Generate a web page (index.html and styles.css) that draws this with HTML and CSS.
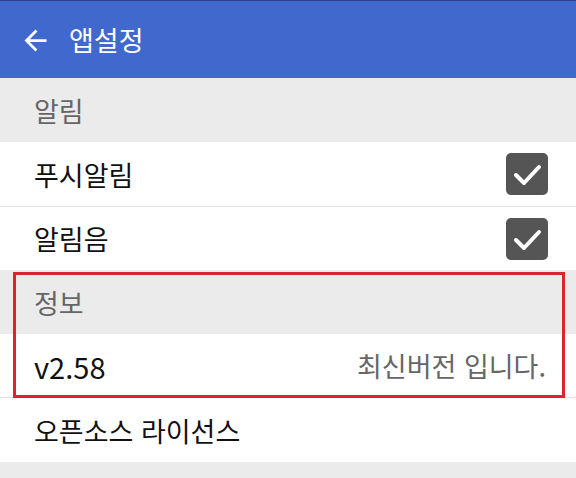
FILE: index.html
```html
<!DOCTYPE html>
<html lang="ko">
<head>
    <meta charset="UTF-8">
    <meta name="viewport" content="width=device-width, initial-scale=1.0">
    <title>앱설정</title>
    <link rel="stylesheet" href="styles.css">
</head>
<body>

<header class="appbar">
    <svg class="back-icon" viewBox="0 0 24 24" width="33" height="33">
        <path d="M20 11H7.83l5.59-5.59L12 4l-8 8 8 8 1.41-1.41L7.83 13H20v-2z" fill="#ffffff"/>
    </svg>
    <div class="appbar-title">앱설정</div>
</header>

<div class="section-title">알림</div>
<div class="row row-line">
    <span class="row-label">푸시알림</span>
    <span class="checkbox">
        <svg viewBox="0 0 42 42" width="42" height="42">
            <path d="M10 22 L18 30 L33 14" fill="none" stroke="#ffffff" stroke-width="4" stroke-linecap="round" stroke-linejoin="round"/>
        </svg>
    </span>
</div>
<div class="row row-short">
    <span class="row-label">알림음</span>
    <span class="checkbox">
        <svg viewBox="0 0 42 42" width="42" height="42">
            <path d="M10 22 L18 30 L33 14" fill="none" stroke="#ffffff" stroke-width="4" stroke-linecap="round" stroke-linejoin="round"/>
        </svg>
    </span>
</div>

<div class="highlight">
    <div class="section-title">정보</div>
    <div class="row row-short row-line">
        <span class="row-label version">v2.58</span>
        <span class="row-value">최신버전 입니다.</span>
    </div>
</div>
<div class="row">
    <span class="row-label">오픈소스 라이선스</span>
</div>

<div class="bottom-gap"></div>

</body>
</html>
```

FILE: styles.css
```css
body {
    font-family: "Noto Sans CJK KR", "Noto Sans", sans-serif;
    margin: 0;
    padding: 0;
    background-color: #ebebeb;
    width: 576px;
    overflow: hidden;
}

.appbar {
    height: 77px;
    border-top: 1px solid #2b3f8e;
    background-color: #4169cd;
    display: flex;
    align-items: center;
    box-sizing: content-box;
}

.back-icon {
    margin-left: 19px;
    margin-top: 1px;
}

.appbar-title {
    margin-left: 17px;
    font-size: 27px;
    color: #ffffff;
    line-height: 1;
}

.section-title {
    height: 64px;
    display: flex;
    align-items: center;
    padding-left: 34px;
    font-size: 27px;
    color: #666666;
    background-color: #ebebeb;
}

.row {
    height: 64px;
    display: flex;
    align-items: center;
    justify-content: space-between;
    padding: 0 28px 0 34px;
    background-color: #ffffff;
}

.row-short {
    height: 63px;
}

.row-line {
    border-bottom: 1px solid #e2e2e2;
}

.row-label {
    font-size: 27px;
    color: #111111;
}

.version {
    font-size: 29px;
}

.row-value {
    font-size: 27px;
    color: #666666;
    margin-right: 2px;
}

.checkbox {
    width: 42px;
    height: 42px;
    border-radius: 5px;
    background-color: #555555;
    display: flex;
}

.highlight {
    position: relative;
}

.highlight::after {
    content: "";
    position: absolute;
    top: 2px;
    bottom: 0;
    left: 13px;
    right: 11px;
    border: 3px solid #d9252f;
}

.bottom-gap {
    height: 16px;
}
```
